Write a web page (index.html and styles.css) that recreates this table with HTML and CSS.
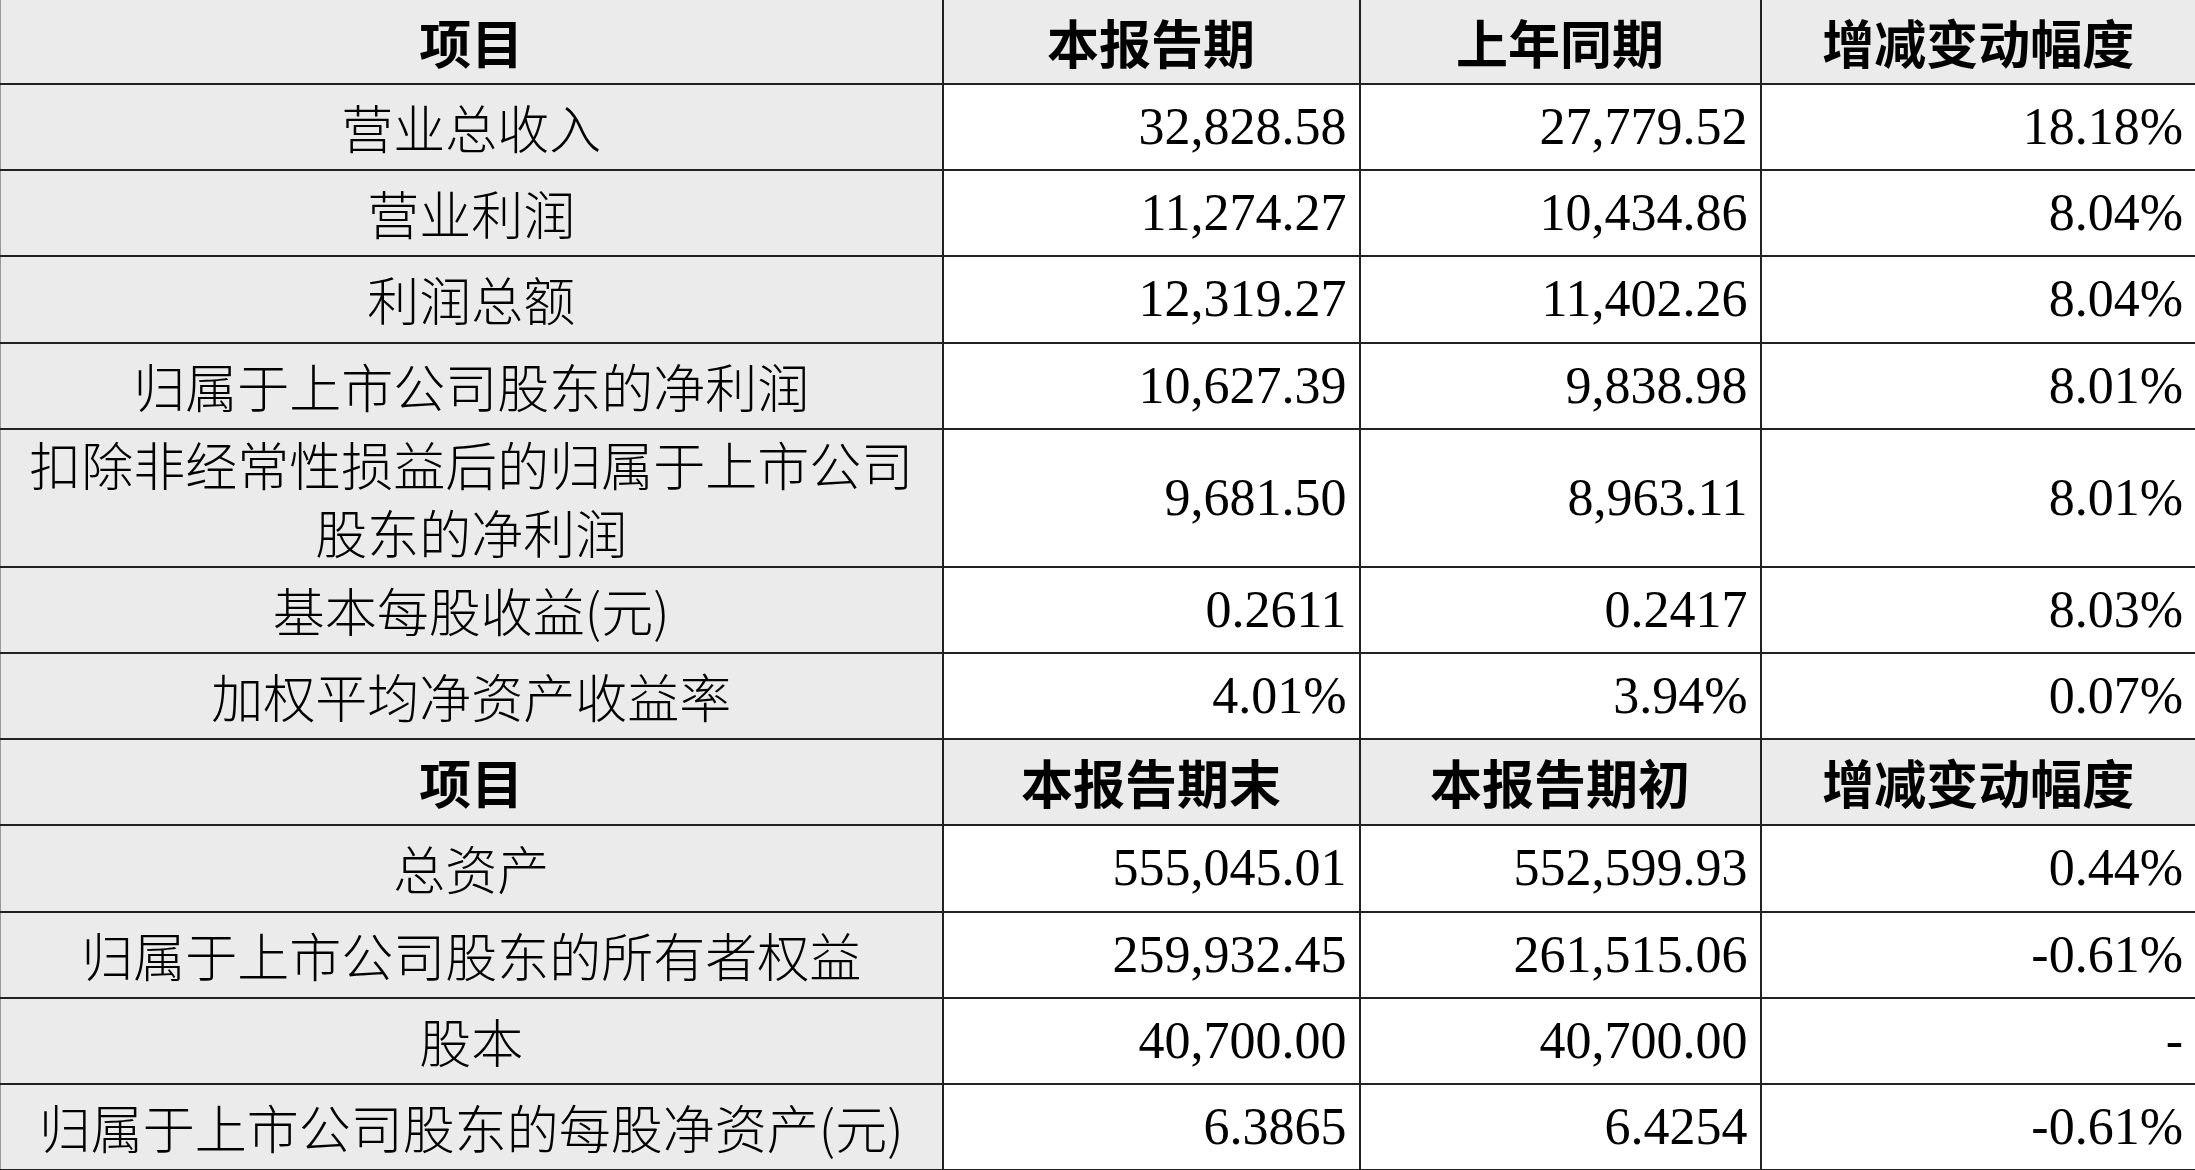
FILE: index.html
```html
<!DOCTYPE html>
<html lang="zh-CN">
<head>
<meta charset="utf-8">
<title>主要财务数据</title>
<link rel="stylesheet" href="styles.css">
</head>
<body>
<table class="fin">
  <colgroup>
    <col class="c-item">
    <col class="c-a">
    <col class="c-b">
    <col class="c-c">
  </colgroup>
  <tbody>
    <tr class="head first">
      <th>项目</th><th>本报告期</th><th>上年同期</th><th>增减变动幅度</th>
    </tr>
    <tr><th class="label">营业总收入</th><td>32,828.58</td><td>27,779.52</td><td>18.18%</td></tr>
    <tr><th class="label">营业利润</th><td>11,274.27</td><td>10,434.86</td><td>8.04%</td></tr>
    <tr><th class="label">利润总额</th><td>12,319.27</td><td>11,402.26</td><td>8.04%</td></tr>
    <tr><th class="label">归属于上市公司股东的净利润</th><td>10,627.39</td><td>9,838.98</td><td>8.01%</td></tr>
    <tr class="tall"><th class="label">扣除非经常性损益后的归属于上市公司股东的净利润</th><td>9,681.50</td><td>8,963.11</td><td>8.01%</td></tr>
    <tr><th class="label">基本每股收益(元)</th><td>0.2611</td><td>0.2417</td><td>8.03%</td></tr>
    <tr><th class="label">加权平均净资产收益率</th><td>4.01%</td><td>3.94%</td><td>0.07%</td></tr>
    <tr class="head">
      <th>项目</th><th>本报告期末</th><th>本报告期初</th><th>增减变动幅度</th>
    </tr>
    <tr><th class="label">总资产</th><td>555,045.01</td><td>552,599.93</td><td>0.44%</td></tr>
    <tr><th class="label">归属于上市公司股东的所有者权益</th><td>259,932.45</td><td>261,515.06</td><td>-0.61%</td></tr>
    <tr><th class="label">股本</th><td>40,700.00</td><td>40,700.00</td><td>-</td></tr>
    <tr><th class="label">归属于上市公司股东的每股净资产(元)</th><td>6.3865</td><td>6.4254</td><td>-0.61%</td></tr>
  </tbody>
</table>
</body>
</html>
```

FILE: styles.css
```css
html, body {
  margin: 0;
  padding: 0;
  background: #ffffff;
}

body {
  width: 2195px;
  height: 1170px;
  overflow: hidden;
  font-family: "Liberation Serif", "Noto Sans CJK SC", serif;
  color: #000;
}

.fin {
  border-collapse: collapse;
  table-layout: fixed;
  width: 2195px;
  font-size: 52px;
}

.c-item { width: 942px; }
.c-a { width: 417px; }
.c-b { width: 401px; }
.c-c { width: 435px; }

.fin th,
.fin td {
  border: 2px solid #222;
  padding: 0 12px;
  height: 84.2px;
  line-height: 58px;
  vertical-align: middle;
  white-space: nowrap;
}

.fin tr > :first-child {
  border-left: 1px solid #9a9a9a;
}

.fin tr > :last-child {
  border-right: 1px solid #8a8a8a;
}

.fin tr.first > * {
  border-top: none;
  height: 83px;
}

.fin td {
  background: #ffffff;
  text-align: right;
  font-weight: 400;
}

.fin th {
  background: #ebebeb;
  text-align: center;
}

.fin th.label {
  font-family: "Noto Sans CJK SC", "Liberation Serif", sans-serif;
  font-weight: 300;
}

.fin tr.head th {
  font-family: "Noto Sans CJK SC", sans-serif;
  font-weight: 700;
}

.fin tr.tall > * {
  height: 135px;
}

.fin tr.tall th.label {
  white-space: normal;
  line-height: 68px;
  padding: 0 26px;
}
```
